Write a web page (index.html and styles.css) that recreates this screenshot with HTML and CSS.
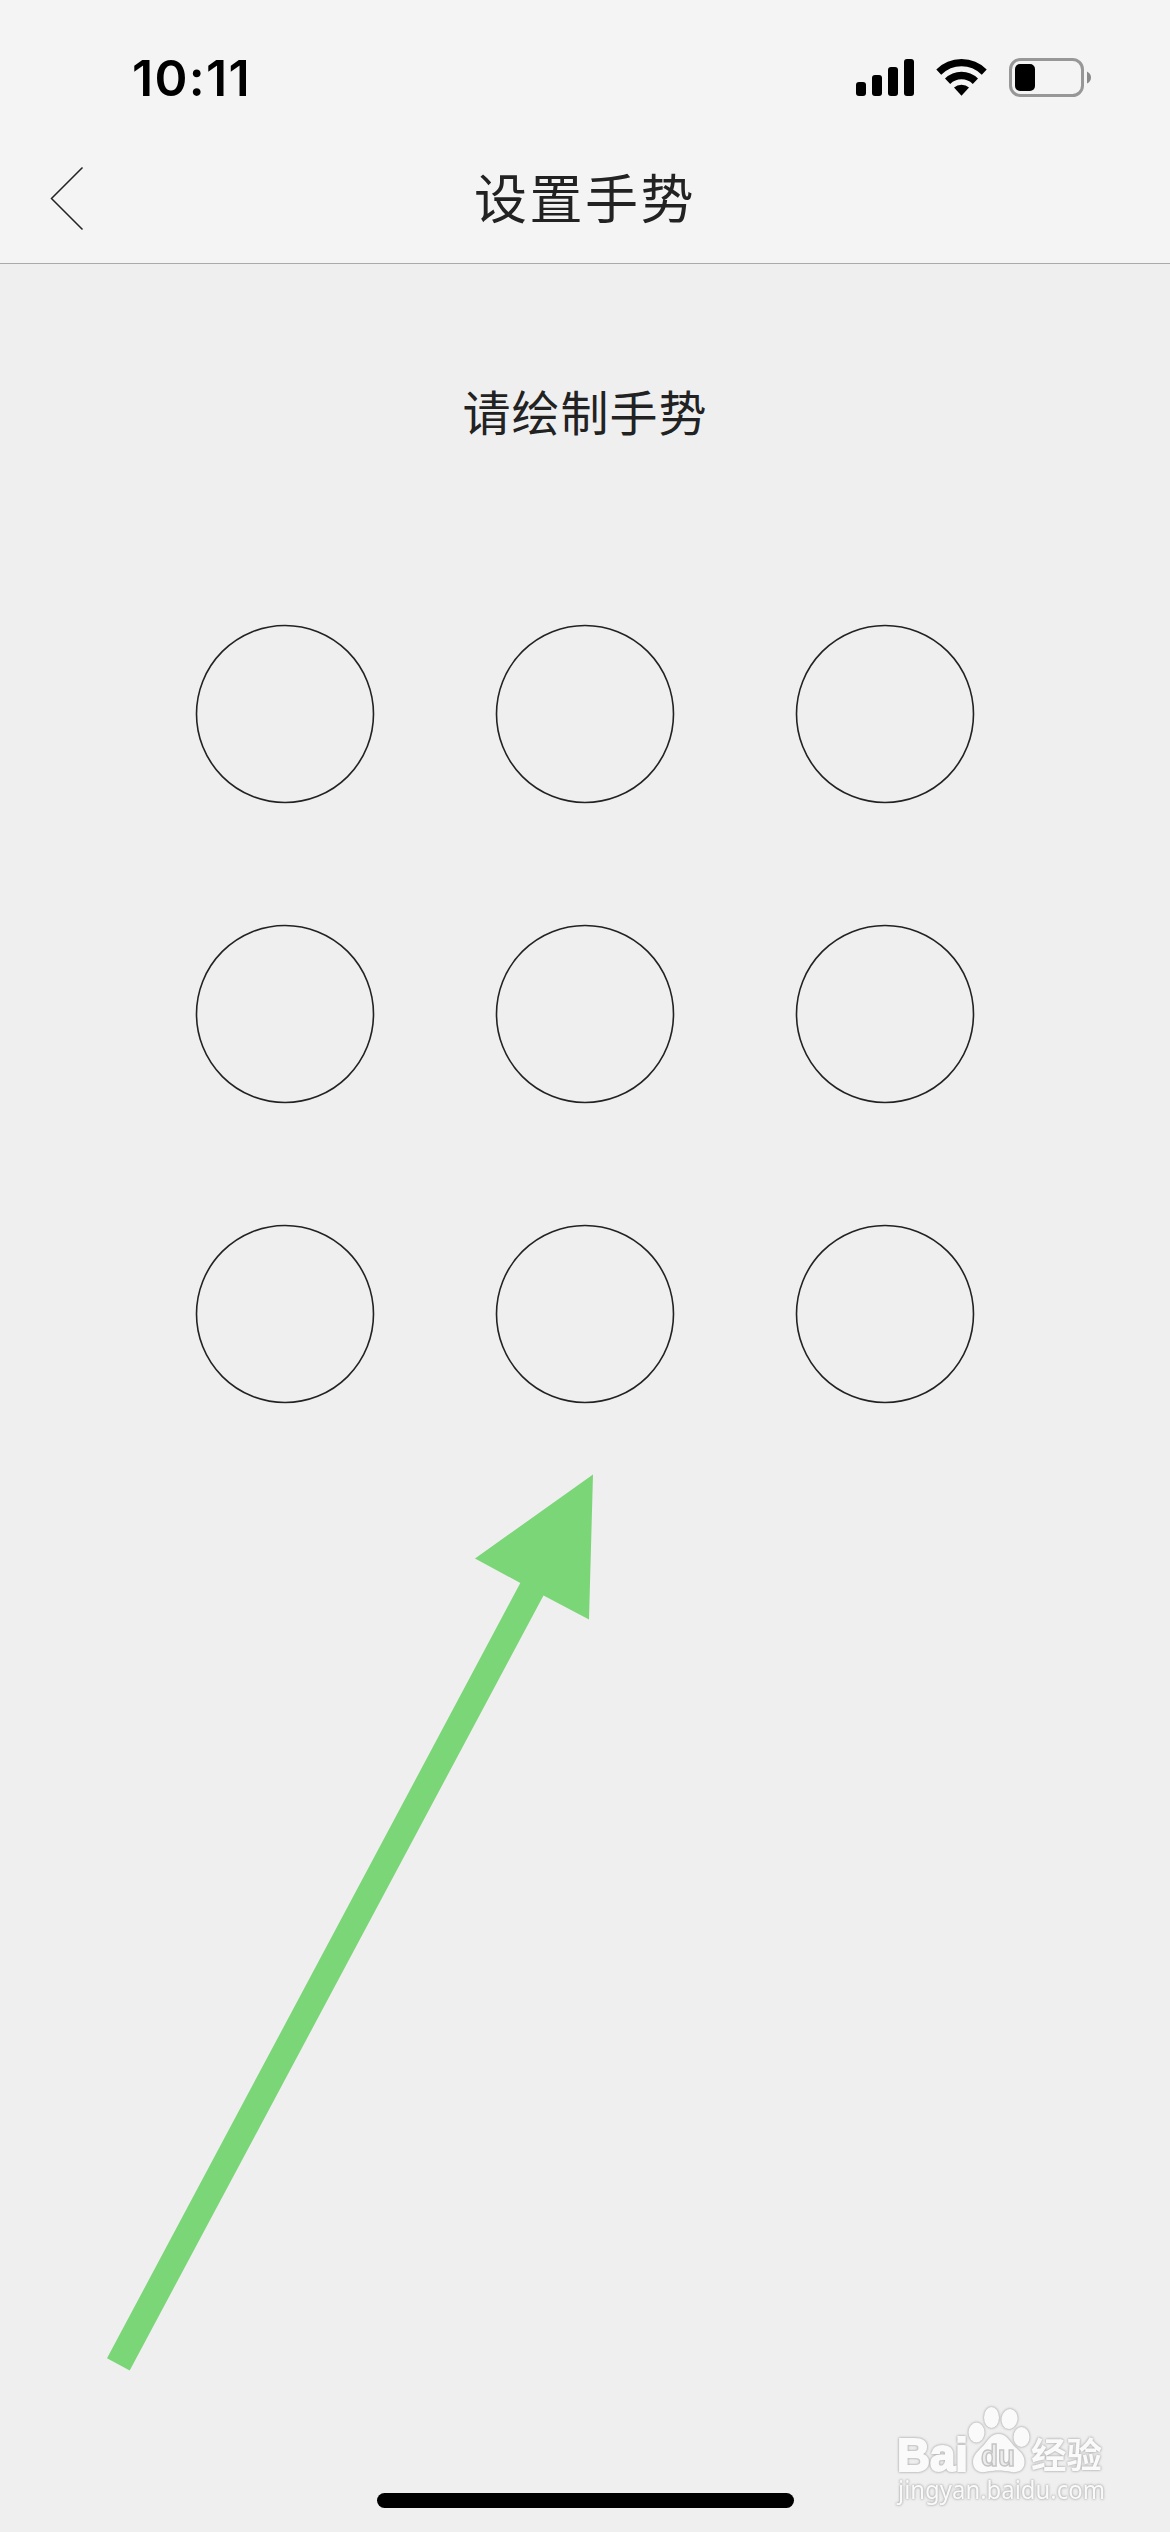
FILE: index.html
```html
<!DOCTYPE html>
<html lang="zh-CN">
<head>
<meta charset="utf-8">
<title>设置手势</title>
<link rel="stylesheet" href="styles.css">
</head>
<body>
<div class="screen">
  <header class="header">
    <div class="status">
      <span class="time">10:11</span>
      <svg class="status-icons" width="240" height="40" viewBox="0 0 240 40">
        <rect x="4" y="25" width="10" height="14" rx="3"/>
        <rect x="20" y="18" width="10" height="21" rx="3"/>
        <rect x="36" y="10" width="10" height="29" rx="3"/>
        <rect x="52" y="2" width="10" height="37" rx="3"/>
        <path d="M84.300 12.600Q94.500 2 109.500 2Q124.500 2 134.700 12.600L129.800 17.700Q121 9.300 109.500 9.300Q98 9.300 89.200 17.700Z"/>
        <path d="M93 21.600Q100 14.800 109.500 14.800Q119 14.800 126 21.600L120.800 26.900Q116 22.300 109.500 22.300Q103 22.300 98.200 26.900Z"/>
        <path d="M102 30.600Q105 27.800 109.500 27.800Q114 27.800 117 30.600L109.500 38.700Z"/>
        <rect x="158.500" y="2.500" width="72" height="36" rx="10" class="battery-shell"/>
        <rect x="163" y="7" width="20" height="27" rx="5"/>
        <path d="M235 14.500Q239 16.500 239 20.500Q239 24.500 235 26.500Z" class="battery-cap"/>
      </svg>
    </div>
    <div class="navbar">
      <svg class="back" width="34" height="66" viewBox="0 0 34 66"><path d="M32.500 1.500L1.500 32.500L32.500 63.500"/></svg>
      <h1 class="title">设置手势</h1>
    </div>
  </header>
  <main class="content">
    <p class="hint">请绘制手势</p>
    <div class="grid">
      <svg class="dot" viewBox="0 0 178 178"><circle cx="89" cy="89" r="88.500"/></svg>
      <svg class="dot" viewBox="0 0 178 178"><circle cx="89" cy="89" r="88.500"/></svg>
      <svg class="dot" viewBox="0 0 178 178"><circle cx="89" cy="89" r="88.500"/></svg>
      <svg class="dot" viewBox="0 0 178 178"><circle cx="89" cy="89" r="88.500"/></svg>
      <svg class="dot" viewBox="0 0 178 178"><circle cx="89" cy="89" r="88.500"/></svg>
      <svg class="dot" viewBox="0 0 178 178"><circle cx="89" cy="89" r="88.500"/></svg>
      <svg class="dot" viewBox="0 0 178 178"><circle cx="89" cy="89" r="88.500"/></svg>
      <svg class="dot" viewBox="0 0 178 178"><circle cx="89" cy="89" r="88.500"/></svg>
      <svg class="dot" viewBox="0 0 178 178"><circle cx="89" cy="89" r="88.500"/></svg>
    </div>
  </main>
  <div class="home-bar"></div>
  <svg class="arrow" width="487" height="897" viewBox="0 0 487 897">
    <path d="M486 0.500L368 84.500L413.300 109L0 884.300L22.700 896.500L436.500 121.500L482 145.500Z"/>
  </svg>
  <svg class="watermark" width="240" height="130" viewBox="0 0 240 130">
    <text x="17" y="81" class="brand" textLength="71" lengthAdjust="spacingAndGlyphs">Bai</text>
    <g class="paw">
      <ellipse cx="96.500" cy="42.500" rx="8" ry="10"/>
      <ellipse cx="111.500" cy="27.500" rx="7.500" ry="10.500"/>
      <ellipse cx="129.500" cy="29" rx="8" ry="10" transform="rotate(10 129.500 29)"/>
      <ellipse cx="141.500" cy="47" rx="8" ry="10"/>
      <path d="M118.500 44C127 44 130 52 135 57C141 62 145 66 144.500 73C144 80 138 83 132 82C126 81 123 80.500 118.500 80.500C114 80.500 111 81 105 82C98 83 93 79 93 72C93 65 98 61 103 56C108 51 110 44 118.500 44Z"/>
    </g>
    <text x="101" y="76" class="du" textLength="34" lengthAdjust="spacingAndGlyphs">du</text>
    <text x="151" y="78" class="cn" textLength="71" lengthAdjust="spacingAndGlyphs">经验</text>
    <text x="18" y="109" class="url" textLength="207" lengthAdjust="spacingAndGlyphs">jingyan.baidu.com</text>
  </svg>
</div>
</body>
</html>
```
FILE: styles.css
```css
* { box-sizing: border-box; }
body {
  margin: 0;
  background: #efefef;
  font-family: "Noto Sans CJK SC", sans-serif;
  color: #222;
}
.screen {
  position: relative;
  display: flex;
  flex-direction: column;
  width: 1170px;
  height: 2532px;
  overflow: hidden;
}
.header {
  height: 264px;
  background: #f4f4f4;
  border-bottom: 1px solid #aaa;
}
.status {
  display: flex;
  justify-content: space-between;
  align-items: center;
  height: 133px;
  padding: 23px 78px 0 132px;
}
.time {
  font: 600 50px/50px Inter, sans-serif;
  letter-spacing: 1.300px;
  color: #000;
}
.status-icons { margin-top: -2px; }
.battery-shell { fill: none; stroke: #979797; stroke-width: 3; }
.battery-cap { fill: #8a8a8a; }
.navbar {
  display: grid;
  grid-template-columns: 120px 1fr 120px;
  align-items: center;
  height: 130px;
}
.back { margin: 1px 0 0 50px; }
.back path { fill: none; stroke: #222; stroke-width: 1.500; }
.title {
  margin: 0;
  padding-bottom: 5px;
  text-align: center;
  font-size: 53px;
  font-weight: 400;
  line-height: 80px;
  letter-spacing: 2.500px;
}
.content {
  flex: 1;
  display: flex;
  flex-direction: column;
  align-items: center;
  padding-top: 111px;
}
.hint {
  margin: 0;
  font-size: 48px;
  line-height: 70px;
  letter-spacing: 1px;
}
.grid {
  display: grid;
  grid-template-columns: repeat(3, 178px);
  gap: 122px;
  margin-top: 180px;
}
.dot {
  width: 178px;
  height: 178px;
  overflow: visible;
}
.dot circle { fill: none; stroke: #222; stroke-width: 1.600; }
.home-bar {
  width: 417px;
  height: 15px;
  margin: 0 auto 24px;
  border-radius: 8px;
  background: #000;
}
.arrow {
  position: absolute;
  left: 107px;
  top: 1474px;
  fill: #7bd678;
}
.watermark {
  position: absolute;
  left: 880px;
  top: 2390px;
  fill: #fafafa;
  filter: drop-shadow(0 0 1px #aaa) drop-shadow(0 0 1px #ccc);
}
.brand {
  font: 700 46px "Liberation Sans", sans-serif;
  stroke: #fafafa;
  stroke-width: 2;
}
.du {
  font: 700 29px "Liberation Sans", sans-serif;
  fill: #ececec;
  stroke: #c4c4c4;
  stroke-width: 1.500;
}
.cn { font: 700 35px "Noto Sans CJK SC", sans-serif; }
.url { font: 400 25px "Noto Sans", sans-serif; }
```
